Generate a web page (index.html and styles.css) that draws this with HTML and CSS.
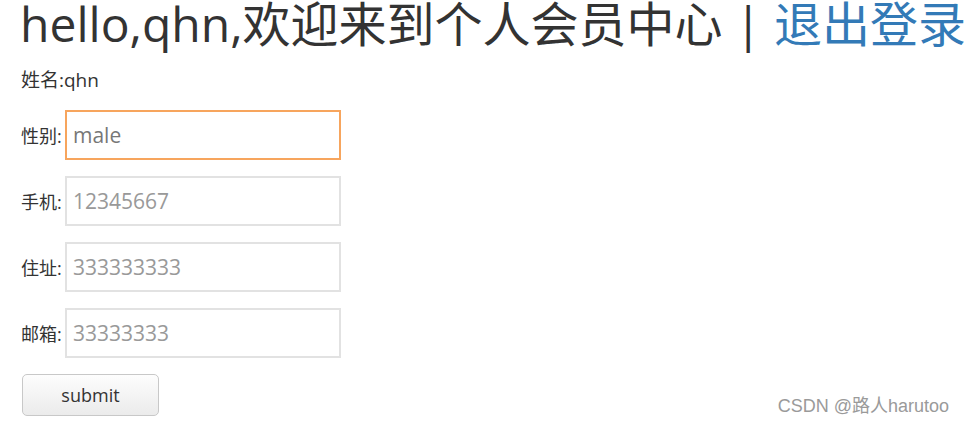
FILE: index.html
```html
<!DOCTYPE html>
<html>
    <head>
        <meta charset="utf-8">
        <title>个人会员中心</title>
        <link rel="stylesheet" href="styles.css">
    </head>
    <body>
        <h1 class="welcome">hello,qhn,欢迎来到个人会员中心 | <a href="#" class="logout">退出登录</a></h1>

        <p class="name">姓名:qhn</p>

        <form class="info">
            <div class="row">
                <label>性别:</label>
                <input type="text" class="field active" value="male">
            </div>
            <div class="row">
                <label>手机:</label>
                <input type="text" class="field" placeholder="12345667">
            </div>
            <div class="row">
                <label>住址:</label>
                <input type="text" class="field" placeholder="333333333">
            </div>
            <div class="row">
                <label>邮箱:</label>
                <input type="text" class="field" placeholder="33333333">
            </div>
            <button type="button" class="submit">submit</button>
        </form>

        <div class="mark">CSDN @路人harutoo</div>
    </body>
</html>
```

FILE: styles.css
```css
body{
    margin: 0;
    padding: 0 21px;
    background-color: #fff;
    color: #333;
    font-family: "Open Sans", "Noto Sans CJK SC", sans-serif;
    overflow: hidden;
}

.welcome{
    font-size: 48px;
    font-weight: 400;
    line-height: 56px;
    margin: -4px 0 0 -1px;
    white-space: nowrap;
}

.logout{
    color: #337ab7;
    text-decoration: none;
}

.name{
    font-size: 19px;
    line-height: 24px;
    margin: 16px 0 0;
}

.info{
    margin-top: 18px;
    display: flex;
    flex-direction: column;
    align-items: flex-start;
    gap: 16px;
}

.row{
    display: flex;
    align-items: center;
}

.row label{
    font-size: 18px;
    width: 44px;
}

.field{
    box-sizing: border-box;
    width: 276px;
    height: 50px;
    border: 2px solid #e2e2e2;
    padding: 0 6px;
    font-family: "Open Sans", sans-serif;
    font-size: 21px;
    color: #777;
    outline: none;
}

.field::placeholder{
    color: #999;
}

.field.active{
    border-color: #f7a55d;
}

.submit{
    width: 137px;
    height: 42px;
    margin-left: 1px;
    border: 1px solid #c8c8c8;
    border-radius: 5px;
    background: linear-gradient(#fdfdfd, #ebebeb);
    font-family: "Open Sans", sans-serif;
    font-size: 18px;
    color: #333;
}

.mark{
    position: absolute;
    right: 15px;
    bottom: 9px;
    font-family: "Liberation Sans", "Noto Sans CJK SC", sans-serif;
    font-size: 18px;
    color: #9a9a9a;
    text-shadow: 0 0 1px #fff;
}
```
